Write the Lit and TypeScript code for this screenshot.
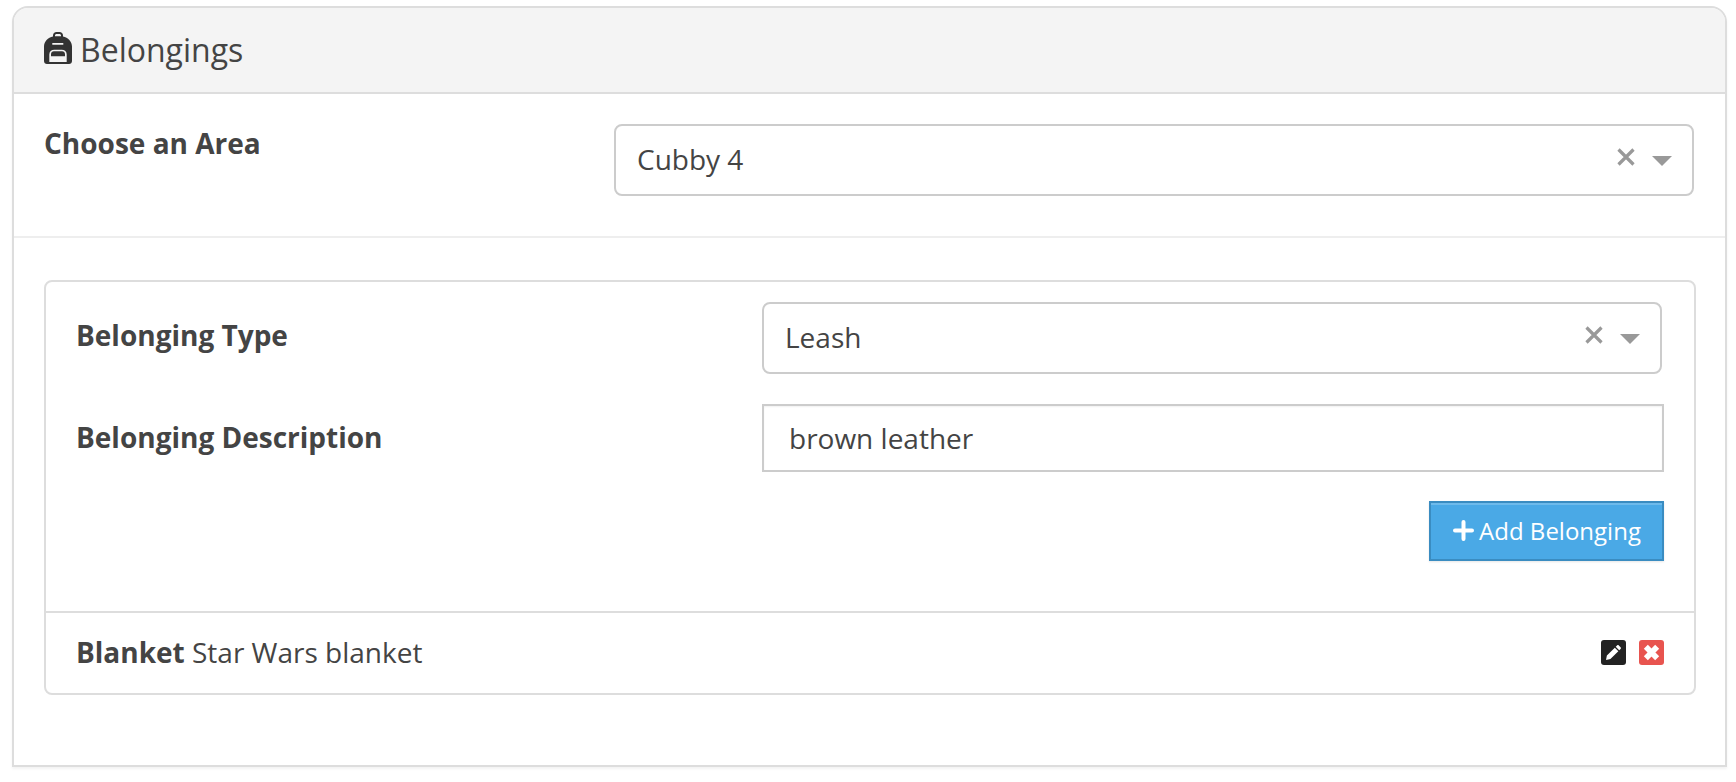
import { LitElement, html, css } from "lit";
import { customElement } from "lit/decorators.js";

const clearCaret = html`
  <span class="controls">
    <svg class="x" width="18" height="18" viewBox="0 0 18 18"><path d="M1.500 1.500 L16.500 16.500 M16.500 1.500 L1.500 16.500" stroke="#999" stroke-width="3.200" fill="none"/></svg>
    <span class="caret"></span>
  </span>`;

@customElement("app-root")
export class AppRoot extends LitElement {
  static styles = css`
    :host { display: block; font-family: "Open Sans", sans-serif; color: #444; background: #fff; height: 782px; box-sizing: border-box; padding: 6px 9px 0 12px; }
    * { box-sizing: border-box; }
    .card { height: 761px; border: 2px solid #ddd; border-radius: 16px 16px 0 0; box-shadow: 0 2px 3px rgba(0,0,0,.05); }
    .head { height: 86px; background: #f4f4f4; border-bottom: 2px solid #ddd; border-radius: 14px 14px 0 0; display: flex; align-items: center; gap: 8px; padding: 0 0 4px 30px; font-size: 32px; color: #444; }
    .head svg { display: block; }
    .head span { margin-top: 3px; }
    .area { display: grid; grid-template-columns: 570px 1fr; padding: 30px 31px 40px 30px; border-bottom: 2px solid #eee; }
    .label { font-weight: 700; font-size: 28px; line-height: 38px; color: #444; }
    .area .label { margin-top: 0; }
    .row .label { margin-top: -6px; }
    .row + .row .label { margin-top: -3px; }
    .select { height: 72px; border: 2px solid #ccc; border-radius: 8px; display: flex; align-items: center; justify-content: space-between; padding: 0 21px; font-size: 28px; color: #444; background: #fff; }
    .select > span:first-child { margin-top: -2px; }
    .controls { display: flex; align-items: center; gap: 17px; margin-top: -2px; margin-right: -1px; }
    .x { display: block; margin-top: -4px; }
    .caret { width: 0; height: 0; border-left: 10px solid transparent; border-right: 10px solid transparent; border-top: 10px solid #999; margin-top: 3px; }
    .inner { margin: 42px 29px 0 30px; height: 415px; border: 2px solid #ddd; border-radius: 8px; display: flex; flex-direction: column; }
    .form { height: 331px; padding: 20px 29px 0 30px; border-bottom: 2px solid #ddd; display: flex; flex-direction: column; }
    .row { display: grid; grid-template-columns: 686px 1fr; align-items: center; }
    .row + .row { margin-top: 30px; }
    .row .select { width: 900px; }
    .input { height: 68px; width: 902px; border: 2px solid #ccc; display: flex; align-items: center; padding: 0 25px; font-size: 28px; color: #444; box-shadow: inset 0 1px 2px rgba(0,0,0,.06); }
    .actions { display: flex; justify-content: flex-end; margin-top: 29px; padding-right: 1px; }
    .btn { width: 235px; height: 60px; background: #4aa9e6; border: 2px solid #3a8cc1; box-shadow: inset 0 2px 0 rgba(255,255,255,.2), 0 1px 2px rgba(0,0,0,.1); color: #fff; font-size: 24px; display: flex; align-items: center; justify-content: center; gap: 5px; font-family: inherit; padding: 0 0 2px 1px; }
    .item { flex: 1; display: flex; align-items: center; justify-content: space-between; padding: 0 30px 0 30px; font-size: 28px; color: #444; }
    .item > div:first-child { margin-top: -2px; }
    .item b { font-weight: 700; }
    .icons { display: flex; gap: 13px; margin-top: -2px; }
    .icon { width: 25px; height: 25px; border-radius: 3px; display: flex; align-items: center; justify-content: center; }
    .icon.edit { background: #222; }
    .icon.del { background: #e8544f; }
    .icon svg { display: block; }
  `;

  render() {
    return html`
      <div class="card">
        <div class="head">
          <svg width="28" height="32" viewBox="0 0 28 32">
            <path fill="#333" fill-rule="evenodd" d="M9 4.500V3.500C9 1.500 10.500 0 12.500 0h3C17.500 0 19 1.500 19 3.500v1c5 1 9 5 9 10V29c0 1.700-1.300 3-3 3H3c-1.700 0-3-1.300-3-3V14.500c0-5 4-9 9-10zM11 4.200h6V3.500c0-.8-.7-1.500-1.500-1.500h-3c-.8 0-1.500.7-1.500 1.500zM8.300 11v1.700h11V11zM5.300 30H7V26h14v4h1.700V22.500c0-3-2-4.800-5-4.800H10.300c-3 0-5 1.800-5 4.800zM7 24.300h14v-2c0-1.800-1.200-3-3-3H10c-1.800 0-3 1.200-3 3zM7 26v4h14v-4z"/>
          </svg>
          <span>Belongings</span>
        </div>
        <div class="area">
          <div class="label">Choose an Area</div>
          <div class="select"><span>Cubby 4</span>${clearCaret}</div>
        </div>
        <div class="inner">
          <div class="form">
            <div class="row">
              <div class="label">Belonging Type</div>
              <div class="select"><span>Leash</span>${clearCaret}</div>
            </div>
            <div class="row">
              <div class="label">Belonging Description</div>
              <div class="input">brown leather</div>
            </div>
            <div class="actions">
              <button class="btn">
                <svg width="21" height="21" viewBox="0 0 21 21"><path d="M10.500 2v17M2 10.500h17" stroke="#fff" stroke-width="4" stroke-linecap="round"/></svg>
                <span>Add Belonging</span>
              </button>
            </div>
          </div>
          <div class="item">
            <div><b>Blanket</b> Star Wars blanket</div>
            <div class="icons">
              <span class="icon edit"><svg width="15" height="15" viewBox="0 0 17 17"><path fill="#fff" d="M0 17l1-5L10 3l4 4-9 9zM11 2l1.500-1.500c.6-.6 1.400-.6 2 0l2 2c.6.6.6 1.400 0 2L15 6z"/></svg></span>
              <span class="icon del"><svg width="17" height="17" viewBox="0 0 15 15"><path d="M2.500 2.500l10 10M12.500 2.500l-10 10" stroke="#fff" stroke-width="5"/></svg></span>
            </div>
          </div>
        </div>
      </div>
    `;
  }
}
